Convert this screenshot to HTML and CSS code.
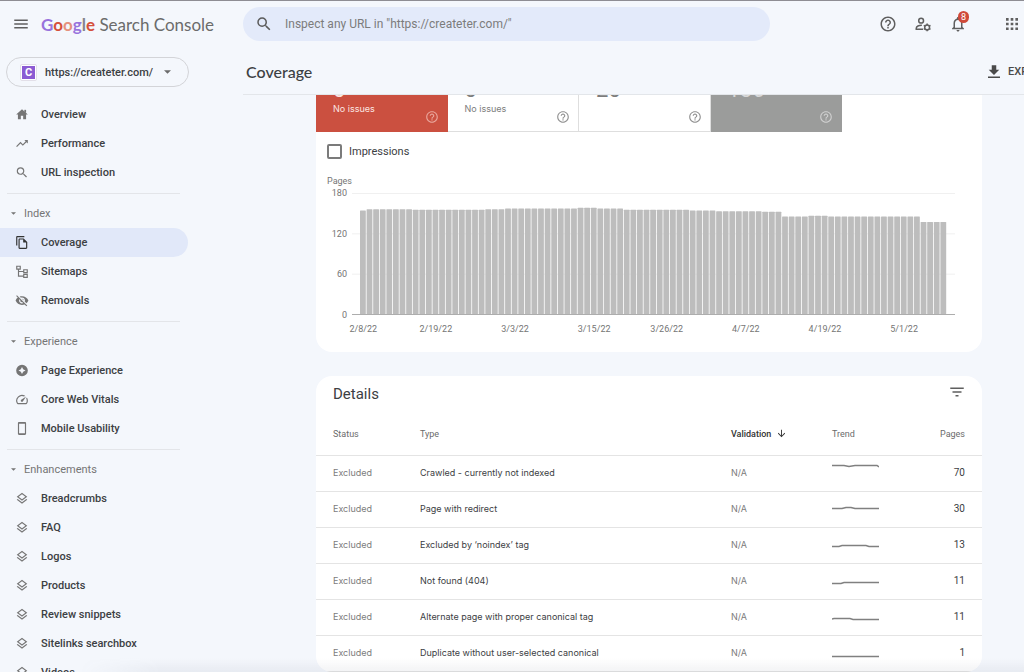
FILE: index.html
```html
<!DOCTYPE html>
<html lang="en">
<head>
<meta charset="utf-8">
<title>Coverage - Search Console</title>
<link rel="stylesheet" href="styles.css">
</head>
<body>
<svg class="sprite" aria-hidden="true">
  <symbol id="i-help" viewBox="0 0 24 24"><path d="M11 18h2v-2h-2v2zm1-16C6.480 2 2 6.480 2 12s4.480 10 10 10 10-4.480 10-10S17.520 2 12 2zm0 18c-4.410 0-8-3.590-8-8s3.590-8 8-8 8 3.590 8 8-3.590 8-8 8zm0-14c-2.210 0-4 1.790-4 4h2c0-1.100.9-2 2-2s2 .9 2 2c0 2-3 1.750-3 5h2c0-2.250 3-2.500 3-5 0-2.210-1.790-4-4-4z"/></symbol>
  <symbol id="i-search" viewBox="0 0 24 24"><path d="M15.500 14h-.79l-.28-.27A6.471 6.471 0 0 0 16 9.500 6.500 6.500 0 1 0 9.500 16c1.610 0 3.090-.59 4.230-1.570l.27.28v.79l5 4.990L20.490 19l-4.990-5zm-6 0C7.010 14 5 11.990 5 9.500S7.010 5 9.500 5 14 7.010 14 9.500 11.990 14 9.500 14z"/></symbol>
  <symbol id="i-layers" viewBox="0 0 24 24"><path d="M11.990 18.540l-7.370-5.730L3 14.070l9 7 9-7-1.630-1.270-7.380 5.740zM12 16l7.360-5.730L21 9l-9-7-9 7 1.630 1.270L12 16zm0-11.470L17.740 9 12 13.470 6.260 9 12 4.530z"/></symbol>
  <symbol id="i-caret" viewBox="0 0 10 5"><path d="M0 0h10L5 5z"/></symbol>
</svg>

<header class="topbar">
  <div class="brand">
    <button class="icon-btn" aria-label="Main menu"><svg class="i18" viewBox="0 0 24 24"><path d="M3 18h18v-2H3v2zm0-5h18v-2H3v2zm0-7v2h18V6H3z"/></svg></button>
    <a class="logo" href="#"><span class="google"><span class="c-violet">G</span><span class="c-red">o</span><span class="c-salmon">o</span><span class="c-violet">g</span><span class="c-gray">l</span><span class="c-red">e</span></span> Search Console</a>
  </div>
  <label class="search">
    <svg class="i18"><use href="#i-search"/></svg>
    <input type="text" aria-label="Inspect URL" placeholder='Inspect any URL in "https://createter.com/"'>
  </label>
  <div class="actions">
    <button class="icon-btn" aria-label="Help"><svg class="i18"><use href="#i-help"/></svg></button>
    <button class="icon-btn" aria-label="User settings"><svg class="i18" viewBox="0 0 24 24" fill="none" stroke="currentColor" stroke-width="2"><circle cx="9.500" cy="7.500" r="3.200"/><path d="M12 19H3v-1.500C3 15 6.500 13.700 10.500 13.800"/><circle cx="17.500" cy="16.500" r="3.200"/><path d="M17.500 11.300v2M17.500 19.700v2M13 13.900l1.800 1M20.200 18.100l1.800 1M13 19.100l1.800-1M20.200 14.900l1.800-1"/></svg></button>
    <button class="icon-btn bell" aria-label="Notifications"><svg class="i18" viewBox="0 0 24 24"><path d="M12 22c1.100 0 2-.9 2-2h-4c0 1.100.9 2 2 2zm6-6v-5c0-3.070-1.630-5.640-4.500-6.320V4c0-.83-.67-1.500-1.500-1.500s-1.500.67-1.500 1.500v.68C7.640 5.360 6 7.920 6 11v5l-2 2v1h16v-1l-2-2zm-2 1H8v-6c0-2.480 1.510-4.500 4-4.500s4 2.020 4 4.500v6z"/></svg><span class="badge">8</span></button>
    <button class="icon-btn apps" aria-label="Google apps"><svg class="i18" viewBox="0 0 24 24"><path d="M4 7.500h3.500V4H4v3.500zm6.250 12.500h3.500v-3.500h-3.500V20zM4 20h3.500v-3.500H4V20zm0-6.250h3.500v-3.500H4v3.500zm6.250 0h3.500v-3.500h-3.500v3.500zM16.500 4v3.500H20V4h-3.500zm-6.250 3.500h3.500V4h-3.500v3.500zm6.250 6.250H20v-3.500h-3.500v3.500zm0 6.250H20v-3.500h-3.500V20z"/></svg></button>
  </div>
</header>

<div class="body">
  <aside class="sidebar">
    <button class="property"><span class="favicon"><span>C</span></span><span class="property-name">https://createter.com/</span><svg class="caret"><use href="#i-caret"/></svg></button>
    <nav>
      <div class="group">
        <a class="item" href="#"><svg class="i16" viewBox="0 0 24 24"><path d="M10 20v-6h4v6h5v-8h3L12 3 2 12h3v8z"/><path d="M16 4h3v5h-3z"/></svg>Overview</a>
        <a class="item" href="#"><svg class="i16" viewBox="0 0 24 24"><path d="M16 6l2.290 2.290-4.880 4.880-4-4L2 16.590 3.410 18l6-6 4 4 6.300-6.290L22 12V6z"/></svg>Performance</a>
        <a class="item" href="#"><svg class="i16"><use href="#i-search"/></svg>URL inspection</a>
      </div>
      <div class="group">
        <button class="heading"><svg class="mini-caret"><use href="#i-caret"/></svg>Index</button>
        <a class="item active" href="#"><svg class="i16" viewBox="0 0 24 24"><path d="M16 1H4c-1.100 0-2 .9-2 2v14h2V3h12V1zm-1 4l6 6v10c0 1.100-.9 2-2 2H7.990C6.890 23 6 22.100 6 21l.01-14c0-1.100.89-2 1.990-2h7zm-1 7V7H8v14h11v-9h-5z"/></svg>Coverage</a>
        <a class="item" href="#"><svg class="i16" viewBox="0 0 24 24" fill="none" stroke="currentColor" stroke-width="2"><path d="M3 3h6v5H3zM15 9h6v5h-6zM15 17h6v5h-6zM6 8v12h9M6 12h9"/></svg>Sitemaps</a>
        <a class="item" href="#"><svg class="i16" viewBox="0 0 24 24"><path d="M12 7c2.760 0 5 2.240 5 5 0 .65-.13 1.260-.36 1.830l2.920 2.920c1.510-1.260 2.700-2.890 3.430-4.750-1.730-4.390-6-7.500-11-7.500-1.400 0-2.740.25-3.980.7l2.160 2.160C10.740 7.130 11.350 7 12 7zM2 4.270l2.280 2.280.46.46C3.080 8.300 1.780 10.020 1 12c1.730 4.390 6 7.500 11 7.500 1.550 0 3.030-.3 4.380-.84l.42.42L19.730 22 21 20.730 3.270 3 2 4.270zM7.530 9.800l1.550 1.550c-.05.21-.08.43-.08.65 0 1.660 1.340 3 3 3 .22 0 .44-.03.65-.08l1.550 1.550c-.67.33-1.410.53-2.200.53-2.760 0-5-2.240-5-5 0-.79.2-1.530.53-2.200zm4.310-.78l3.150 3.150.02-.16c0-1.660-1.340-3-3-3l-.17.01z"/></svg>Removals</a>
      </div>
      <div class="group">
        <button class="heading"><svg class="mini-caret"><use href="#i-caret"/></svg>Experience</button>
        <a class="item" href="#"><svg class="i16" viewBox="0 0 24 24"><path fill-rule="evenodd" d="M12 2a10 10 0 1 0 0 20 10 10 0 0 0 0-20zm0 4l2 4 4 2-4 2-2 4-2-4-4-2 4-2z"/></svg>Page Experience</a>
        <a class="item" href="#"><svg class="i16" viewBox="0 0 24 24"><path d="M20.380 8.570l-1.230 1.850a8 8 0 0 1-.22 7.580H5.070A8 8 0 0 1 15.580 6.850l1.850-1.230A10 10 0 0 0 3.350 19a2 2 0 0 0 1.720 1h13.850a2 2 0 0 0 1.740-1 10 10 0 0 0-.27-10.440zm-9.790 6.840a2 2 0 0 0 2.830 0l5.660-8.490-8.490 5.660a2 2 0 0 0 0 2.830z"/></svg>Core Web Vitals</a>
        <a class="item" href="#"><svg class="i16" viewBox="0 0 24 24"><path d="M17 1H7c-1.100 0-2 .9-2 2v18c0 1.100.9 2 2 2h10c1.100 0 2-.9 2-2V3c0-1.100-.9-2-2-2zm0 19H7V4h10v16z"/></svg>Mobile Usability</a>
      </div>
      <div class="group">
        <button class="heading"><svg class="mini-caret"><use href="#i-caret"/></svg>Enhancements</button>
        <a class="item" href="#"><svg class="i16"><use href="#i-layers"/></svg>Breadcrumbs</a>
        <a class="item" href="#"><svg class="i16"><use href="#i-layers"/></svg>FAQ</a>
        <a class="item" href="#"><svg class="i16"><use href="#i-layers"/></svg>Logos</a>
        <a class="item" href="#"><svg class="i16"><use href="#i-layers"/></svg>Products</a>
        <a class="item" href="#"><svg class="i16"><use href="#i-layers"/></svg>Review snippets</a>
        <a class="item" href="#"><svg class="i16"><use href="#i-layers"/></svg>Sitelinks searchbox</a>
        <a class="item" href="#"><svg class="i16"><use href="#i-layers"/></svg>Videos</a>
      </div>
    </nav>
  </aside>

  <main class="main">
    <div class="titlebar">
      <h1>Coverage</h1>
      <button class="export"><svg class="i18" viewBox="0 0 24 24"><path d="M19 9h-4V3H9v6H5l7 7 7-7zM4 18v2h16v-2H4z"/></svg>EXPORT</button>
    </div>
    <div class="scroll">
      <section class="card chart-card">
        <div class="tiles">
          <div class="tile error"><div class="count">0</div><div class="foot"><span>No issues</span><svg class="i14"><use href="#i-help"/></svg></div></div>
          <div class="tile"><div class="count">0</div><div class="foot"><span>No issues</span><svg class="i14"><use href="#i-help"/></svg></div></div>
          <div class="tile"><div class="count">20</div><div class="foot"><span></span><svg class="i14"><use href="#i-help"/></svg></div></div>
          <div class="tile excluded"><div class="count">136</div><div class="foot"><span></span><svg class="i14"><use href="#i-help"/></svg></div></div>
        </div>
        <label class="impressions"><input type="checkbox">Impressions</label>
        <div class="chart">
          <div class="chart-title">Pages</div>
          <div class="y-axis"><span>180</span><span>120</span><span>60</span><span>0</span></div>
          <svg class="plot" viewBox="0 0 603 122" preserveAspectRatio="none" id="plot"></svg>
          <div class="x-axis" id="xaxis"></div>
        </div>
      </section>

      <section class="card">
        <div class="card-head">
          <h2>Details</h2>
          <button class="icon-btn" aria-label="Filter"><svg class="i18" viewBox="0 0 24 24"><path d="M10 18h4v-2h-4v2zM3 6v2h18V6H3zm3 7h12v-2H6v2z"/></svg></button>
        </div>
        <table>
          <colgroup><col class="c-status"><col><col class="c-valid"><col class="c-trend"><col class="c-pages"></colgroup>
          <thead>
            <tr><th>Status</th><th>Type</th><th class="sorted">Validation<svg class="sort" viewBox="0 0 24 24"><path d="M20 12l-1.410-1.410L13 16.170V4h-2v12.170l-5.580-5.590L4 12l8 8 8-8z"/></svg></th><th>Trend</th><th>Pages</th></tr>
          </thead>
          <tbody>
            <tr><td>Excluded</td><td>Crawled - currently not indexed</td><td>N/A</td><td><svg class="trend" viewBox="0 0 47 27"><path d="M0 5.500h12l5 1 6-1h22l2 1.500"/></svg></td><td>70</td></tr>
            <tr><td>Excluded</td><td>Page with redirect</td><td>N/A</td><td><svg class="trend" viewBox="0 0 47 27"><path d="M0 12.500h10l4-1h5l4 1h24"/></svg></td><td>30</td></tr>
            <tr><td>Excluded</td><td>Excluded by ‘noindex’ tag</td><td>N/A</td><td><svg class="trend" viewBox="0 0 47 27"><path d="M0 14.500h7l3-1h24l3 1h10"/></svg></td><td>13</td></tr>
            <tr><td>Excluded</td><td>Not found (404)</td><td>N/A</td><td><svg class="trend" viewBox="0 0 47 27"><path d="M0 15.500h9l3-1h35"/></svg></td><td>11</td></tr>
            <tr><td>Excluded</td><td>Alternate page with proper canonical tag</td><td>N/A</td><td><svg class="trend" viewBox="0 0 47 27"><path d="M0 15l2-.5h16l3 1h26"/></svg></td><td>11</td></tr>
            <tr><td>Excluded</td><td>Duplicate without user-selected canonical</td><td>N/A</td><td><svg class="trend" viewBox="0 0 47 27"><path d="M0 16.500h47"/></svg></td><td>1</td></tr>
          </tbody>
        </table>
      </section>
    </div>
  </main>
</div>
<script src="chart.js"></script>
</body>
</html>
```
FILE: styles.css
```css
* { box-sizing: border-box; }
body {
  margin: 0;
  height: 100vh;
  display: flex;
  flex-direction: column;
  overflow: hidden;
  border-top: 1px solid #8e8d93;
  background: #f4f7fc;
  color: #3c4043;
  font-family: Roboto, "Liberation Sans", sans-serif;
  font-size: 11px;
}
body::after {
  content: "";
  position: fixed;
  left: 80px;
  right: 0;
  bottom: 0;
  height: 14px;
  background: linear-gradient(rgba(90, 100, 120, 0), rgba(90, 100, 120, 0.08));
  -webkit-mask-image: linear-gradient(90deg, transparent, #000 80px);
  mask-image: linear-gradient(90deg, transparent, #000 80px);
  pointer-events: none;
}
button { font: inherit; color: inherit; background: none; border: 0; padding: 0; }
a { color: inherit; text-decoration: none; }
h1, h2 { margin: 0; font-weight: 400; }
svg { fill: currentColor; flex: none; }
svg[fill="none"] { fill: none; }
.sprite { position: absolute; width: 0; height: 0; }
.i18 { width: 18px; height: 18px; display: block; }
.i16 { width: 15px; height: 15px; }
.i14 { width: 14px; height: 14px; }
.icon-btn { color: #5f5f5f; }

.topbar { display: flex; align-items: center; flex: none; height: 46px; }
.brand { display: flex; align-items: center; gap: 11px; width: 243px; padding-left: 12px; flex: none; }
.logo { font: 400 17px Lato, sans-serif; color: #6b6b6b; white-space: nowrap; }
.google { font-weight: 700; }
.c-violet { color: #9873dc; }
.c-red { color: #d5503c; }
.c-salmon { color: #e5917e; }
.c-gray { color: #85858c; }
.search {
  flex: 1;
  display: flex;
  align-items: center;
  gap: 12px;
  height: 34px;
  padding: 0 12px;
  border-radius: 17px;
  background: #e3eafa;
  color: #5a5a5a;
}
.search input { flex: 1; min-width: 0; border: 0; padding: 0; outline: 0; background: none; font: inherit; font-size: 12px; }
.search input::placeholder { color: #7c7c7c; opacity: 1; }
.actions { display: flex; align-items: center; gap: 17px; padding: 0 3px 0 109px; }
.bell { position: relative; }
.badge {
  position: absolute;
  top: -4px;
  right: -2px;
  width: 11px;
  height: 12px;
  border-radius: 6px;
  background: #cf4a3a;
  color: #fff;
  font-size: 9px;
  line-height: 12px;
}
.apps { margin-left: 19px; }

.body { display: flex; flex: 1; min-height: 0; }
.sidebar { width: 243px; flex: none; padding-top: 10px; overflow: hidden; }
.property {
  display: flex;
  align-items: center;
  width: 183px;
  height: 30px;
  margin-left: 6px;
  padding: 0 17px 0 13px;
  border: 1px solid #d3d4d8;
  border-radius: 15px;
  font-weight: 500;
}
.favicon { display: grid; place-items: center; width: 17px; height: 17px; margin-right: 8px; border: 1px solid #e2dfe8; border-radius: 2px; background: #fff; }
.favicon span { width: 13px; height: 13px; background: #8b5bd3; color: #fff; font-size: 11px; font-weight: 700; line-height: 13px; }
.property-name { flex: 1; text-align: left; }
.caret { width: 7px; height: 4px; color: #6b6b6b; }
nav { padding-top: 13px; }
.group + .group { margin-top: 6px; }
.group + .group::before { content: ""; display: block; width: 173px; margin-left: 7px; border-top: 1px solid #e3e5e9; }
.heading { display: flex; align-items: center; gap: 8px; height: 29px; margin-top: 5px; padding-left: 11px; color: #757575; font-weight: 400; }
.mini-caret { width: 5px; height: 3px; }
.item { display: flex; align-items: center; gap: 12px; width: 188px; height: 29px; padding-left: 15px; font-weight: 500; white-space: nowrap; }
.item svg { width: 14px; color: #757575; }
.active { border-radius: 0 15px 15px 0; background: #e1e8f9; }
.item.active svg { color: #333; }

.main { flex: 1; min-width: 0; display: flex; flex-direction: column; }
.titlebar { display: flex; align-items: center; justify-content: space-between; flex: none; height: 48px; padding: 2px 0 0 3px; border-bottom: 1px solid #e3e6ea; }
h1 { font: 500 16px Lato, sans-serif; }
.export { display: flex; align-items: center; gap: 5px; margin-right: -25px; font-weight: 500; font-size: 11px; color: #4a4a4a; }
.scroll { flex: 1; min-height: 0; overflow: hidden; padding: 0 42px 0 73px; }
.card { border-radius: 16px; background: #fff; overflow: hidden; }
.card + .card { margin-top: 24px; }
.chart-card { margin-top: -17px; padding-bottom: 17px; }
.tiles { display: grid; grid-template-columns: repeat(4, 1fr); width: 79%; }
.tile { padding-left: 17px; border: solid #dedede; border-width: 0 1px 1px 0; color: #7c7c7c; font-family: Inter, sans-serif; font-size: 9px; }
.tile svg { color: #929292; }
.count { height: 24px; font: 400 22px/24px Roboto, sans-serif; }
.foot { display: flex; justify-content: space-between; height: 29px; padding: 1px 8px 0 0; line-height: 12px; }
.foot svg { margin-top: 7px; }
.error { background: #cb5040; border-color: #cb5040; color: #fbe6e2; }
.tile.error svg { color: #e9a59b; }
.excluded { background: #9b9c9b; border-color: #9b9c9b; color: #d8d8d8; }
.tile.excluded svg { color: #cfcfcf; }
.impressions { display: flex; align-items: center; gap: 7px; margin: 11px 11px 16px; height: 16px; }
.impressions input { appearance: none; width: 15px; height: 15px; margin: 0; border: 2px solid #7b7b7b; border-radius: 2px; }
.chart { display: grid; grid-template-columns: 20px 1fr; column-gap: 5px; padding: 0 27px 0 11px; color: #757575; font-size: 9px; line-height: 12px; }
.chart-title { grid-column: 1 / -1; }
.y-axis { display: flex; flex-direction: column; justify-content: space-between; height: 134px; text-align: right; }
.plot { width: 100%; height: 122px; margin-top: 6px; }
.x-axis { grid-column: 2; display: grid; grid-template-columns: repeat(89, minmax(0, 1fr)); margin-top: 2px; padding: 0 8px; }
.x-axis span { grid-row: 1; justify-self: center; white-space: nowrap; }

.card-head { display: flex; align-items: center; justify-content: space-between; height: 36px; padding: 0 16px 0 17px; }
.card-head button { padding-bottom: 4px; }
h2 { font-size: 15px; }
table { width: 100%; table-layout: fixed; border-collapse: separate; border-spacing: 0; }
.c-status { width: 104px; }
.c-valid { width: 101px; }
.c-trend { width: 100px; }
.c-pages { width: 50px; }
th, td { padding: 0; text-align: left; border-bottom: 1px solid #e4e4e4; white-space: nowrap; }
th { height: 44px; font-size: 9px; font-weight: 400; color: #6b6b6b; }
td { height: 36px; font-family: Inter, sans-serif; font-size: 9px; padding-bottom: 2px; }
td:nth-child(4) { padding-bottom: 0; }
th:first-child, td:first-child { padding-left: 17px; }
th:last-child, td:last-child { padding-right: 17px; text-align: right; }
td:last-child { font: 400 10px Roboto, sans-serif; }
td:nth-child(1), td:nth-child(3) { color: #7c7c7c; }
th.sorted { color: #333; font-weight: 500; }
.sort { width: 11px; height: 11px; margin-left: 5px; vertical-align: -2px; }
.trend { display: block; width: 47px; height: 27px; fill: none; stroke: #808080; stroke-width: 1.5; }
```
FILE: chart.js
```js
// [first day index, indexed pages] for each run of equal values
const runs = [[0, 154], [1, 156], [8, 155], [19, 156], [22, 157], [33, 158], [36, 157], [40, 155], [50, 154], [54, 153], [61, 152], [64, 145], [68, 146], [71, 145], [85, 137]];
const days = 89, max = 180, width = 603, height = 121, inset = 8;
const pitch = (width - inset * 2) / days;

let shapes = '';
[0, 60, 120].forEach(v => {
  const y = v / max * height;
  shapes += `<rect x="0" y="${y}" width="${width}" height="1" fill="#f0f0f0"/>`;
});
for (let day = 0; day < days; day++) {
  const value = runs.filter(r => r[0] <= day).pop()[1];
  const h = value / max * height;
  const x = inset + day * pitch;
  shapes += `<rect x="${x.toFixed(2)}" y="${(height - h).toFixed(2)}" width="5.8" height="${h.toFixed(2)}" rx="0.5" fill="#bdbdbd"/>`;
}
shapes += `<rect x="0" y="${height}" width="${width}" height="1" fill="#adadad"/>`;
document.getElementById('plot').innerHTML = shapes;

const labels = { 0: '2/8/22', 11: '2/19/22', 23: '3/3/22', 35: '3/15/22', 46: '3/26/22', 58: '4/7/22', 70: '4/19/22', 82: '5/1/22' };
document.getElementById('xaxis').innerHTML = Object.entries(labels)
  .map(([day, text]) => `<span style="grid-column:${Number(day) + 1}">${text}</span>`).join('');
```
